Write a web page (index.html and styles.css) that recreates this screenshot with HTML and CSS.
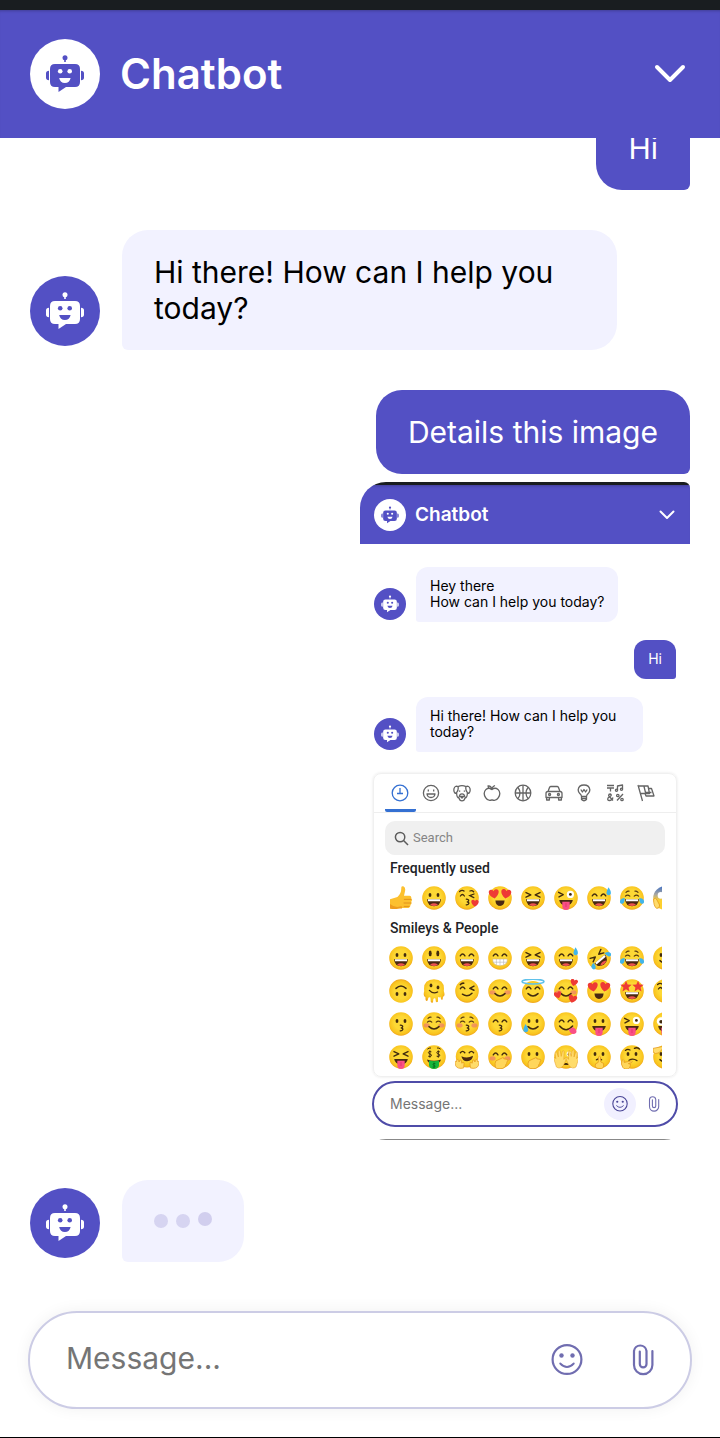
FILE: index.html
```html
<!DOCTYPE html>
<html lang="en">
<head>
<meta charset="utf-8">
<meta name="viewport" content="width=device-width, initial-scale=1">
<title>Chatbot</title>
<link rel="stylesheet" href="styles.css">
</head>
<body>

<svg class="sprite" aria-hidden="true">
  <defs>
    <radialGradient id="skin" cx="50%" cy="45%" r="55%">
      <stop offset="0.5" stop-color="#fdd835"/>
      <stop offset="0.85" stop-color="#f9c41e"/>
      <stop offset="1" stop-color="#efa41c"/>
    </radialGradient>
    <linearGradient id="fright" x1="0" y1="0" x2="0" y2="1">
      <stop offset="0" stop-color="#3f6fc4"/>
      <stop offset="0.35" stop-color="#a9a7a0"/>
      <stop offset="0.6" stop-color="#fdd02f"/>
    </linearGradient>

    <circle id="p-face" cx="12" cy="12" r="11.8" fill="url(#skin)"/>
    <g id="p-eyes" fill="#422b0d"><ellipse cx="8" cy="9" rx="1.4" ry="2"/><ellipse cx="16" cy="9" rx="1.4" ry="2"/></g>
    <g id="p-tall" fill="#422b0d"><ellipse cx="8.2" cy="7.4" rx="1.5" ry="2.9"/><ellipse cx="15.8" cy="7.4" rx="1.5" ry="2.9"/></g>
    <path id="p-happy" d="M5.3 9.8Q7.6 6.4 9.9 9.8M14.1 9.8Q16.4 6.4 18.7 9.8" fill="none" stroke="#422b0d" stroke-width="1.5" stroke-linecap="round"/>
    <path id="p-shut" d="M5.4 10.2Q7.6 8 9.8 10.2M14.2 10.2Q16.4 8 18.6 10.2M6 6.4Q7.4 5 9 5.2M15 5.2Q16.6 5 18 6.4" fill="none" stroke="#5a3d12" stroke-width="1.2" stroke-linecap="round"/>
    <path id="p-squint" d="M5 6.6L9.8 8.9L5 11.2M19 6.6L14.2 8.9L19 11.2" fill="none" stroke="#422b0d" stroke-width="1.4" stroke-linecap="round" stroke-linejoin="round"/>
    <g id="p-open"><path d="M5 13.2H19Q18.3 20.2 12 20.2Q5.7 20.2 5 13.2Z" fill="#4a2911"/><path d="M6 13.2H18V15.3H6Z" fill="#fff"/><path d="M8 18.7Q12 15.9 16 18.7Q12 21.2 8 18.7Z" fill="#ef5350"/></g>
    <path id="p-smile" d="M7 14.6Q12 19.4 17 14.6" fill="none" stroke="#422b0d" stroke-width="1.5" stroke-linecap="round"/>
    <path id="p-kiss" d="M11.3 13.2Q14.2 13.6 13.6 14.9Q13.2 15.9 11.8 15.9Q14.3 16.2 13.8 17.5Q13.2 19 11.2 18.8" fill="none" stroke="#422b0d" stroke-width="1.3" stroke-linecap="round"/>
    <g id="p-blush" fill="#ed7770" opacity="0.65"><ellipse cx="4.6" cy="13.4" rx="3" ry="2.1"/><ellipse cx="19.4" cy="13.4" rx="3" ry="2.1"/></g>
    <g id="p-tongue"><path d="M5.2 14H18.8Q18 19.4 12 19.4Q6 19.4 5.2 14Z" fill="#4a2911"/><path d="M8.3 15.8H15.7V20Q15.7 24 12 24Q8.3 24 8.3 20Z" fill="#fa4f86"/><path d="M12 17V21" stroke="#d92f66" stroke-width="0.7"/></g>
    <path id="p-heart" d="M0 3.4C-5 0.2-4.2-3.6-1.8-3.4C-0.5-3.4 0-2 0-2C0-2 0.6-3.6 2.2-3.3C4.8-2.8 4 1 0 3.4Z" fill="#ee3a35"/>
    <g id="p-wild"><path d="M4.6 6.3L9.2 8.6L5 10.9" fill="none" stroke="#422b0d" stroke-width="1.4" stroke-linecap="round" stroke-linejoin="round"/><circle cx="16.4" cy="8.4" r="3.6" fill="#fff"/><circle cx="16.4" cy="8.4" r="1.4" fill="#422b0d"/></g>
    <path id="p-hand" d="M7.4 22.6Q6.5 18 7.8 15.9L14.8 12.7Q16.2 12.5 15.8 13.8L19.4 14.4Q20.6 15 19.4 16L18.8 17.6Q19.3 18.6 18 19.1Q17.5 23.8 12 23.8Q8.8 23.8 7.4 22.6Z" fill="#ffd65b" stroke="#e59a1c" stroke-width="0.8"/>
    <path id="p-star" d="M0-4.2L1.2-1.4L4.2-1.2L1.9 0.8L2.6 3.8L0 2.2L-2.6 3.8L-1.9 0.8L-4.2-1.2L-1.2-1.4Z" fill="#ee3a35"/>
    <g id="p-joytears" fill="#40b5ea"><path d="M4.8 12Q-0.6 12.6 0 16.4Q1.2 19 3.6 17Q4.8 15.5 4.8 12Z"/><path d="M19.2 12Q24.6 12.6 24 16.4Q22.8 19 20.4 17Q19.2 15.5 19.2 12Z"/></g>
  </defs>

  <symbol id="e-thumb" viewBox="0 0 24 24"><path d="M1 13.2L8.4 11Q12.5 7.6 12.3 1.5Q12.6-0.2 14.8 0.6Q17 2 15.8 6.2L15 9.7H20.6Q22.8 10.1 22.2 12.3Q23.7 13.8 22.2 15.7Q23.2 17.5 21.4 18.9Q21.8 21.2 19.5 22H11Q7.5 23.7 1 22.4Z" fill="#fcc02f"/><path d="M1 18Q6 22 10.8 20.5Q14 19.5 13 22.4H9Q6 23.6 1 22.4Z" fill="#ee9c20"/><path d="M15.3 13.4H22M15 17H21.8M15.2 20.4H20" stroke="#de8c1c" stroke-width="0.9" stroke-linecap="round"/></symbol>
  <symbol id="e-grinning" viewBox="0 0 24 24"><use href="#p-face"/><use href="#p-eyes"/><use href="#p-open"/></symbol>
  <symbol id="e-smiley" viewBox="0 0 24 24"><use href="#p-face"/><use href="#p-tall"/><use href="#p-open"/></symbol>
  <symbol id="e-smile" viewBox="0 0 24 24"><use href="#p-face"/><use href="#p-happy"/><use href="#p-open"/></symbol>
  <symbol id="e-grin" viewBox="0 0 24 24"><use href="#p-face"/><use href="#p-happy"/><path d="M4.6 13H19.4Q19.6 19.6 12 19.8Q4.4 19.6 4.6 13Z" fill="#fff" stroke="#d6b46c" stroke-width="0.6"/><path d="M4.8 16.2H19.2M8.4 13V19M12 13V19.6M15.6 13V19" stroke="#b5b5b5" stroke-width="0.6"/></symbol>
  <symbol id="e-laughing" viewBox="0 0 24 24"><use href="#p-face"/><use href="#p-squint"/><use href="#p-open"/></symbol>
  <symbol id="e-sweat" viewBox="0 0 24 24"><use href="#p-face"/><use href="#p-happy"/><use href="#p-open"/><path d="M21.6 1.2Q25 6.6 23.4 8.4Q21.4 10 19.8 8.2Q18.6 6 21.6 1.2Z" fill="#40b5ea"/></symbol>
  <symbol id="e-joy" viewBox="0 0 24 24"><use href="#p-face"/><use href="#p-shut"/><use href="#p-open"/><use href="#p-joytears"/></symbol>
  <symbol id="e-rofl" viewBox="0 0 24 24"><g transform="rotate(-40 12 12)"><use href="#p-face"/><use href="#p-squint"/><use href="#p-open"/><use href="#p-joytears"/></g></symbol>
  <symbol id="e-slight" viewBox="0 0 24 24"><use href="#p-face"/><use href="#p-eyes"/><use href="#p-smile"/></symbol>
  <symbol id="e-upside" viewBox="0 0 24 24"><g transform="rotate(180 12 12)"><use href="#p-face"/><use href="#p-eyes"/><use href="#p-smile"/></g></symbol>
  <symbol id="e-melting" viewBox="0 0 24 24"><path d="M2.2 12Q0.8 0.4 12 0.2Q23.2 0.4 21.8 12Q23.6 17.4 21 17.8L20.6 20.4Q19.4 21.4 19 20L18.4 17.8Q17.2 19.4 16 17.8V22.6Q14.8 24 13.8 22.6L13.4 19.6Q12.2 18.6 11.4 20L11 23.2Q9.8 24.4 8.8 23L8.4 18.6Q7 17.6 6.4 18.8L5.6 21.6Q4.4 22.6 3.6 21L3.4 18Q0.8 17.8 2.2 12Z" fill="url(#skin)"/><g fill="#422b0d"><ellipse cx="9" cy="6.4" rx="1.4" ry="1.9"/><ellipse cx="16" cy="8.4" rx="1.4" ry="1.9"/></g><path d="M7.4 11.4Q11 15.4 15.6 13" fill="none" stroke="#422b0d" stroke-width="1.4" stroke-linecap="round"/></symbol>
  <symbol id="e-wink" viewBox="0 0 24 24"><use href="#p-face"/><path d="M5.4 9.6Q7.6 6.6 9.8 9.6M19 7.2L14.8 9.3L19 11.2M5.4 5.6Q7 3.8 8.8 4.2M7.4 15.2Q12.6 18.8 17 14.2" fill="none" stroke="#422b0d" stroke-width="1.5" stroke-linecap="round" stroke-linejoin="round"/></symbol>
  <symbol id="e-blush" viewBox="0 0 24 24"><use href="#p-face"/><use href="#p-blush"/><use href="#p-happy"/><use href="#p-smile"/></symbol>
  <symbol id="e-innocent" viewBox="0 0 24 24"><circle cx="12" cy="13" r="11" fill="url(#skin)"/><use href="#p-happy"/><use href="#p-smile"/><ellipse cx="12" cy="2.6" rx="11" ry="2.4" fill="none" stroke="#5fc1ea" stroke-width="1.5"/></symbol>
  <symbol id="e-hearts" viewBox="0 0 24 24"><use href="#p-face"/><use href="#p-blush"/><use href="#p-happy"/><use href="#p-smile"/><use href="#p-heart" transform="translate(20 3.6) rotate(14)"/><use href="#p-heart" transform="translate(3.8 16) rotate(-16)"/><use href="#p-heart" transform="translate(18.6 20) rotate(14) scale(1.15)"/></symbol>
  <symbol id="e-hearteyes" viewBox="0 0 24 24"><use href="#p-face"/><path d="M7.4 14.6H16.6Q16.2 20 12 20Q7.8 20 7.4 14.6Z" fill="#4a2911"/><use href="#p-heart" transform="translate(6 8) rotate(-8) scale(1.35)"/><use href="#p-heart" transform="translate(18 8) rotate(8) scale(1.35)"/></symbol>
  <symbol id="e-starstruck" viewBox="0 0 24 24"><use href="#p-face"/><use href="#p-open"/><use href="#p-star" transform="translate(6 7.4) scale(1.35)"/><use href="#p-star" transform="translate(18 7.4) scale(1.35)"/></symbol>
  <symbol id="e-kissheart" viewBox="0 0 24 24"><use href="#p-face"/><use href="#p-kiss"/><path d="M5.4 10Q7.4 7 9.4 10M19 8L14.8 9.6L18.8 11.6M4.6 5.6Q7 3.4 9 5M15 5Q17 4 18.6 5.8" fill="none" stroke="#422b0d" stroke-width="1.3" stroke-linecap="round"/><use href="#p-heart" transform="translate(20 17.2)"/></symbol>
  <symbol id="e-kissing" viewBox="0 0 24 24"><use href="#p-face"/><use href="#p-eyes"/><use href="#p-kiss"/></symbol>
  <symbol id="e-relaxed" viewBox="0 0 24 24"><use href="#p-face"/><use href="#p-blush"/><use href="#p-shut"/><use href="#p-smile"/></symbol>
  <symbol id="e-kissclosed" viewBox="0 0 24 24"><use href="#p-face"/><use href="#p-blush"/><use href="#p-shut"/><use href="#p-kiss"/></symbol>
  <symbol id="e-kisssmile" viewBox="0 0 24 24"><use href="#p-face"/><use href="#p-happy"/><use href="#p-kiss"/></symbol>
  <symbol id="e-tear" viewBox="0 0 24 24"><use href="#p-face"/><use href="#p-eyes"/><use href="#p-smile"/><path d="M4.6 12Q8 17 7 19Q5 21.6 2.6 19.2Q1.6 17 4.6 12Z" fill="#40b5ea"/></symbol>
  <symbol id="e-yum" viewBox="0 0 24 24"><use href="#p-face"/><use href="#p-happy"/><path d="M5.6 14Q12 21.4 18.6 14" fill="none" stroke="#422b0d" stroke-width="1.5" stroke-linecap="round"/><path d="M14.6 17.6L19 15.2Q23.6 17.4 22.2 20.8Q19.6 23.4 16.4 20.8Z" fill="#fa4f86"/></symbol>
  <symbol id="e-tongue" viewBox="0 0 24 24"><use href="#p-face"/><use href="#p-eyes"/><use href="#p-tongue"/></symbol>
  <symbol id="e-winktongue" viewBox="0 0 24 24"><use href="#p-face"/><use href="#p-wild"/><use href="#p-tongue"/></symbol>
  <symbol id="e-zany" viewBox="0 0 24 24"><use href="#p-face"/><circle cx="8" cy="9.4" r="4.2" fill="#fff"/><circle cx="8" cy="9.8" r="1.7" fill="#422b0d"/><circle cx="17" cy="8" r="3" fill="#fff"/><use href="#p-tongue"/></symbol>
  <symbol id="e-squinttongue" viewBox="0 0 24 24"><use href="#p-face"/><use href="#p-squint"/><use href="#p-tongue"/></symbol>
  <symbol id="e-money" viewBox="0 0 24 24"><use href="#p-face"/><path d="M9.4 6.8Q6.2 5.8 6.4 7.6Q6.6 8.8 8 9Q9.8 9.4 9.4 10.8Q8.6 12.2 6.2 11.2M7.9 5.4V12.6M17.8 6.8Q14.6 5.8 14.8 7.6Q15 8.8 16.4 9Q18.2 9.4 17.8 10.8Q17 12.2 14.6 11.2M16.3 5.4V12.6M5.4 4.2Q7 2.6 9 3M15 3Q17 2.6 18.6 4.2" fill="none" stroke="#422b0d" stroke-width="1"/><path d="M5 14.4Q12 17 19 14.4Q18.4 18.6 12 18.8Q5.6 18.6 5 14.4Z" fill="#4a2911"/><path d="M7 15.4Q12 17 17 15.4V20.6Q16.4 24 12 24Q7.6 24 7 20.6Z" fill="#18b63a"/><path d="M13.4 18.6Q10.8 18 11 19.4Q11.2 20.2 12 20.4Q13.6 20.8 13 21.8Q12.2 22.6 10.6 22M12 17.6V23" stroke="#076a1c" stroke-width="0.8" fill="none"/></symbol>
  <symbol id="e-hug" viewBox="0 0 24 24"><circle cx="12" cy="11.4" r="11.2" fill="url(#skin)"/><path d="M5.4 7.8Q7.6 5 9.8 7.8M14.2 7.8Q16.4 5 18.6 7.8" fill="none" stroke="#422b0d" stroke-width="1.4" stroke-linecap="round"/><path d="M6.4 11.2Q12 14 18 10.8Q17.4 16.2 12 16.2Q7.4 16.2 6.4 11.2Z" fill="#4a2911"/><path id="hug-hand" d="M8.6 23Q2.4 24.4 0.6 20.6L-0.2 16.6Q0.6 15.6 1.4 17L2 14.6Q3 13.8 3.6 15L4 17L5.2 14.8Q6.4 14.6 6.4 16L6.8 18.2L8 17.4Q9.6 17.4 9 19Z" fill="#ffdc6b" stroke="#e59a1c" stroke-width="0.7"/><use href="#hug-hand" transform="translate(24 0) scale(-1 1)"/></symbol>
  <symbol id="e-giggle" viewBox="0 0 24 24"><use href="#p-face"/><use href="#p-blush"/><use href="#p-happy"/><use href="#p-hand"/></symbol>
  <symbol id="e-gasp" viewBox="0 0 24 24"><use href="#p-face"/><use href="#p-eyes"/><use href="#p-hand"/></symbol>
  <symbol id="e-peek" viewBox="0 0 24 24"><use href="#p-face"/><ellipse cx="15" cy="9" rx="2.4" ry="2.8" fill="#fff"/><circle cx="15" cy="9.4" r="1.3" fill="#422b0d"/><path d="M9.4 19.4Q12 17.4 14.6 19.4Z" fill="#422b0d" stroke="#422b0d" stroke-width="1"/><path id="peek-hand" d="M2.4 22L0 14.6Q-0.6 12.6 0.6 12.2L1.8 13.6L1 8Q1 6.4 2.6 6.8L4.4 12L4.2 5.6Q5 4.2 6.2 5.6L7.2 11.4L8.4 6Q9.8 5 10.2 6.8L9.8 14.4L11.6 12.2Q13 12.4 12.4 14L9.4 20.6Q6 24.6 2.4 22Z" fill="#ffdc6b" stroke="#e59a1c" stroke-width="0.5"/><use href="#peek-hand" transform="translate(24.4 0) scale(-1 1)"/></symbol>
  <symbol id="e-shush" viewBox="0 0 24 24"><use href="#p-face"/><use href="#p-eyes"/><path d="M9.4 14.8Q12 13.2 14.6 14.8" fill="none" stroke="#422b0d" stroke-width="1.3" stroke-linecap="round"/><path d="M10.8 23.4Q7.4 22.4 8.6 18.8L11.2 17.4L11.6 11.8Q12.6 10.6 13.4 11.8L13.8 17L16.6 18.4Q17.6 23 14.6 23.6Z" fill="#ffd65b" stroke="#e59a1c" stroke-width="0.8"/></symbol>
  <symbol id="e-think" viewBox="0 0 24 24"><use href="#p-face"/><use href="#p-eyes"/><path d="M5.4 5.4Q7.6 3.6 10 5M14.4 3.4Q17 1.8 19.4 4M9 15.2Q13 13 17 15.6" fill="none" stroke="#422b0d" stroke-width="1.3" stroke-linecap="round"/><path d="M2.8 22.4Q0.4 19 2 15.6Q3.4 13.6 4 15.4L4.2 17.4L11.4 15.8Q12.8 16.4 11.6 17.6L8.4 18.6Q11.4 18.6 10.4 20.6Q9.4 24.6 5.6 24Q3.8 24 2.8 22.4Z" fill="#ffd65b" stroke="#e59a1c" stroke-width="0.8"/></symbol>
  <symbol id="e-salute" viewBox="0 0 24 24"><use href="#p-face"/><use href="#p-eyes"/><use href="#p-smile"/><path d="M0 3.4L9 1.6Q11 2 9.8 3.6L6 7.8Q2 9.6 0 7Z" fill="#ffdc6b" stroke="#e59a1c" stroke-width="0.8"/></symbol>
  <symbol id="e-scream" viewBox="0 0 24 24"><circle cx="12" cy="12" r="11.8" fill="url(#fright)"/><circle cx="8" cy="9.4" r="3.3" fill="#fff"/><circle cx="16" cy="9.4" r="3.3" fill="#fff"/><ellipse cx="12" cy="17.6" rx="3" ry="4" fill="#4a2911"/><path d="M0.6 13Q2.6 10.8 4 14L6.6 19Q7 22.6 3.6 22.4Q0.4 20 0.6 13Z" fill="#ffdc6b" stroke="#e59a1c" stroke-width="0.8"/></symbol>

  <symbol id="i-robot" viewBox="0 0 70 70">
    <g fill="currentColor"><circle cx="35" cy="18.8" r="2.5"/><path d="M34.2 20H35.8V23H34.2Z"/><path d="M25 25H45Q50 25 50 30V43Q50 48 45 48H36L28.5 53V48H25Q20 48 20 43V30Q20 25 25 25Z"/><path d="M19 31.8V41.2Q16 41.2 16 38.5V34.5Q16 31.8 19 31.8ZM51 31.8V41.2Q54 41.2 54 38.5V34.5Q54 31.8 51 31.8Z"/></g>
    <g class="robot-cut"><circle cx="30.2" cy="32.2" r="2.3"/><circle cx="39.7" cy="32.2" r="2.3"/><path d="M29.2 39H40.6Q39.6 44 34.9 44Q30.2 44 29.2 39Z"/></g>
  </symbol>
  <symbol id="i-chevron" viewBox="0 0 32 20"><path d="M3 3L16 16L29 3" fill="none" stroke="currentColor" stroke-width="4" stroke-linecap="round" stroke-linejoin="round"/></symbol>
  <symbol id="i-smiley" viewBox="0 0 32 32"><g fill="none" stroke="currentColor" stroke-linecap="round"><circle cx="16" cy="15.5" r="14.4" stroke-width="2.2"/><path d="M9.2 19.5Q16 26.500 22.8 19.5" stroke-width="1.8"/></g><circle cx="10.5" cy="11.5" r="2.2" fill="currentColor"/><circle cx="21.5" cy="11.5" r="2.2" fill="currentColor"/></symbol>
  <symbol id="i-clip" viewBox="0 0 32 32"><path d="M25.4 7V21A9 9 0 0 1 7 21V7A6.3 6.3 0 0 1 19.5 7V20A3.3 3.3 0 0 1 12.8 20V7.5" fill="none" stroke="currentColor" stroke-width="2.2" stroke-linecap="round"/></symbol>
</svg>

<div class="chatbot">
  <div class="status-strip"></div>
  <header class="chat-header">
    <span class="avatar avatar-light"><svg class="icon"><use href="#i-robot"/></svg></span>
    <h1 class="title">Chatbot</h1>
    <button class="close" type="button" aria-label="Close chat"><svg class="icon"><use href="#i-chevron"/></svg></button>
  </header>

  <main class="chat-body">
    <div class="messages">
      <div class="message user"><p class="bubble">Hi</p></div>
      <div class="message bot">
        <span class="avatar"><svg class="icon"><use href="#i-robot"/></svg></span>
        <p class="bubble">Hi there! How can I help you today?</p>
      </div>
      <div class="message user">
        <p class="bubble">Details this image</p>

        <section class="attachment" aria-label="Attached image">
          <div class="status-strip"></div>
          <header class="chat-header">
            <span class="avatar avatar-light"><svg class="icon"><use href="#i-robot"/></svg></span>
            <h2 class="title">Chatbot</h2>
            <button class="close" type="button" aria-label="Close preview"><svg class="icon"><use href="#i-chevron"/></svg></button>
          </header>
          <div class="messages">
            <div class="message bot">
              <span class="avatar"><svg class="icon"><use href="#i-robot"/></svg></span>
              <p class="bubble">Hey there<br>How can I help you today?</p>
            </div>
            <div class="message user"><p class="bubble">Hi</p></div>
            <div class="message bot">
              <span class="avatar"><svg class="icon"><use href="#i-robot"/></svg></span>
              <p class="bubble">Hi there! How can I help you today?</p>
            </div>
          </div>

          <div class="picker">
            <nav class="tabs" aria-label="Emoji categories">
              <button class="tab active" type="button" aria-label="Frequently used"><svg viewBox="0 0 18 18"><circle cx="9" cy="9" r="7.8"/><path d="M9 4V10M6 9.5H12"/></svg></button>
              <button class="tab" type="button" aria-label="Smileys and people"><svg viewBox="0 0 18 18"><circle cx="9" cy="9" r="7.6"/><path d="M5 10H13Q12.5 13.5 9 13.5Q5.500 13.5 5 10ZM6.300 5.600V7.400M11.700 5.600V7.400"/></svg></button>
              <button class="tab" type="button" aria-label="Animals and nature"><svg viewBox="0 0 18 18"><path d="M5 2.600Q9 0.800 13 2.600Q16 1.400 17 4.600Q17.600 8 15.800 9.400L14.400 8.600Q14.400 14 11.800 14.400Q11.400 16.800 9 16.800Q6.600 16.800 6.200 14.400Q3.600 14 3.600 8.600L2.200 9.400Q0.400 8 1 4.600Q2 1.400 5 2.600ZM5.200 3Q5.600 6 3.600 8.600M12.800 3Q12.400 6 14.400 8.600M6.600 6.400V7.800M11.400 6.400V7.800M6 13.500Q6.500 9.800 9 9.800Q11.500 9.800 12 13.500M7.500 12.500H10.500L9 14Z"/></svg></button>
              <button class="tab" type="button" aria-label="Food and drink"><svg viewBox="0 0 18 18"><path d="M9 5.500Q12 3 15 5.400Q18.400 9 15.400 13.600Q13 17.600 9 15.800Q5 17.600 2.600 13.600Q-0.400 9 3 5.400Q6 3 9 5.500ZM9 5.500Q9 2.500 12 1.500M9 5.500Q5.500 5 5 2Q8 1.500 9 5.500"/></svg></button>
              <button class="tab" type="button" aria-label="Activities"><svg viewBox="0 0 18 18"><circle cx="9" cy="9" r="7.8"/><path d="M9 1.200V16.800M1.200 9H16.800M4 3.500Q8 9 4 14.500M14 3.500Q10 9 14 14.500"/></svg></button>
              <button class="tab" type="button" aria-label="Travel and places"><svg viewBox="0 0 18 18"><path d="M3 7.500L4.600 3.200Q5 2.500 6 2.500H12Q13 2.500 13.400 3.200L15 7.500M3 7.500H15Q17 7.500 17 9.500V13.500H1V9.500Q1 7.500 3 7.500ZM1.600 13.500V16H4.400V13.500M13.600 13.500V16H16.400V13.500"/><circle cx="4.600" cy="10.500" r="1"/><circle cx="13.400" cy="10.500" r="1"/></svg></button>
              <button class="tab" type="button" aria-label="Objects"><svg viewBox="0 0 18 18"><path d="M6.500 12.500Q6.500 11 4.800 9.600Q3 7.800 3.200 5.600Q3.800 1 9 1Q14.200 1 14.800 5.600Q15 7.800 13.200 9.600Q11.500 11 11.500 12.500ZM6.500 12.500V15.500Q9 18 11.500 15.500V12.500M6.500 14.500H11.500M5.800 5.500L7.400 8L9 5.500L10.600 8L12.200 5.500"/></svg></button>
              <button class="tab" type="button" aria-label="Symbols"><svg viewBox="0 0 18 18"><path d="M1 1.500H8M1 4H8M4.500 4V7.500M11.500 6V2L16.500 1V5M7 16.500L2.600 11.800Q2.600 10 4.200 10Q5.800 10.400 5 11.800L2 14Q1 16.500 3.500 16.500Q6 16.500 7 13.500M11 16.500L17 10"/><circle cx="10.500" cy="6.300" r="1.100"/><circle cx="15.500" cy="5.300" r="1.100"/><circle cx="11.800" cy="11.500" r="1.200"/><circle cx="16" cy="15.500" r="1.200"/></svg></button>
              <button class="tab" type="button" aria-label="Flags"><svg viewBox="0 0 18 18"><path d="M1 1L5.500 17M2 2H11L12.500 9.500H4M11 4.500H14.500L17 12H9L8 9.500M7 2.500L8.500 8.500H14.500"/></svg></button>
            </nav>
            <div class="search">
              <svg viewBox="0 0 16 16" aria-hidden="true"><circle cx="6.500" cy="6.500" r="5"/><path d="M10.200 10.200L15 15"/></svg>
              <input type="search" placeholder="Search" aria-label="Search emoji">
            </div>
            <h3 class="group-title">Frequently used</h3>
            <div class="emoji-grid">
              <button type="button" aria-label="Thumbs up"><svg><use href="#e-thumb"/></svg></button>
              <button type="button" aria-label="Grinning"><svg><use href="#e-grinning"/></svg></button>
              <button type="button" aria-label="Blowing a kiss"><svg><use href="#e-kissheart"/></svg></button>
              <button type="button" aria-label="Heart eyes"><svg><use href="#e-hearteyes"/></svg></button>
              <button type="button" aria-label="Laughing"><svg><use href="#e-laughing"/></svg></button>
              <button type="button" aria-label="Winking with tongue"><svg><use href="#e-winktongue"/></svg></button>
              <button type="button" aria-label="Sweat smile"><svg><use href="#e-sweat"/></svg></button>
              <button type="button" aria-label="Tears of joy"><svg><use href="#e-joy"/></svg></button>
              <button type="button" aria-label="Screaming"><svg><use href="#e-scream"/></svg></button>
            </div>
            <h3 class="group-title">Smileys &amp; People</h3>
            <div class="emoji-grid">
              <button type="button" aria-label="Grinning"><svg><use href="#e-grinning"/></svg></button>
              <button type="button" aria-label="Big smile"><svg><use href="#e-smiley"/></svg></button>
              <button type="button" aria-label="Smiling eyes"><svg><use href="#e-smile"/></svg></button>
              <button type="button" aria-label="Beaming"><svg><use href="#e-grin"/></svg></button>
              <button type="button" aria-label="Laughing"><svg><use href="#e-laughing"/></svg></button>
              <button type="button" aria-label="Sweat smile"><svg><use href="#e-sweat"/></svg></button>
              <button type="button" aria-label="Rolling on the floor"><svg><use href="#e-rofl"/></svg></button>
              <button type="button" aria-label="Tears of joy"><svg><use href="#e-joy"/></svg></button>
              <button type="button" aria-label="Slight smile"><svg><use href="#e-slight"/></svg></button>

              <button type="button" aria-label="Upside down"><svg><use href="#e-upside"/></svg></button>
              <button type="button" aria-label="Melting"><svg><use href="#e-melting"/></svg></button>
              <button type="button" aria-label="Wink"><svg><use href="#e-wink"/></svg></button>
              <button type="button" aria-label="Blush"><svg><use href="#e-blush"/></svg></button>
              <button type="button" aria-label="Halo"><svg><use href="#e-innocent"/></svg></button>
              <button type="button" aria-label="Smiling with hearts"><svg><use href="#e-hearts"/></svg></button>
              <button type="button" aria-label="Heart eyes"><svg><use href="#e-hearteyes"/></svg></button>
              <button type="button" aria-label="Star struck"><svg><use href="#e-starstruck"/></svg></button>
              <button type="button" aria-label="Blowing a kiss"><svg><use href="#e-kissheart"/></svg></button>

              <button type="button" aria-label="Kissing"><svg><use href="#e-kissing"/></svg></button>
              <button type="button" aria-label="Relaxed"><svg><use href="#e-relaxed"/></svg></button>
              <button type="button" aria-label="Kissing, closed eyes"><svg><use href="#e-kissclosed"/></svg></button>
              <button type="button" aria-label="Kissing, smiling eyes"><svg><use href="#e-kisssmile"/></svg></button>
              <button type="button" aria-label="Smiling with tear"><svg><use href="#e-tear"/></svg></button>
              <button type="button" aria-label="Yum"><svg><use href="#e-yum"/></svg></button>
              <button type="button" aria-label="Tongue out"><svg><use href="#e-tongue"/></svg></button>
              <button type="button" aria-label="Winking with tongue"><svg><use href="#e-winktongue"/></svg></button>
              <button type="button" aria-label="Zany"><svg><use href="#e-zany"/></svg></button>

              <button type="button" aria-label="Squinting with tongue"><svg><use href="#e-squinttongue"/></svg></button>
              <button type="button" aria-label="Money mouth"><svg><use href="#e-money"/></svg></button>
              <button type="button" aria-label="Hugging"><svg><use href="#e-hug"/></svg></button>
              <button type="button" aria-label="Hand over mouth"><svg><use href="#e-giggle"/></svg></button>
              <button type="button" aria-label="Gasping"><svg><use href="#e-gasp"/></svg></button>
              <button type="button" aria-label="Peeking"><svg><use href="#e-peek"/></svg></button>
              <button type="button" aria-label="Shushing"><svg><use href="#e-shush"/></svg></button>
              <button type="button" aria-label="Thinking"><svg><use href="#e-think"/></svg></button>
              <button type="button" aria-label="Saluting"><svg><use href="#e-salute"/></svg></button>
            </div>
          </div>

          <div class="composer">
            <input type="text" placeholder="Message..." aria-label="Preview message">
            <button class="tool active" type="button" aria-label="Preview emoji"><svg class="icon"><use href="#i-smiley"/></svg></button>
            <button class="tool" type="button" aria-label="Preview attach"><svg class="icon"><use href="#i-clip"/></svg></button>
          </div>
          <div class="attachment-edge"></div>
        </section>
      </div>

      <div class="message bot">
        <span class="avatar"><svg class="icon"><use href="#i-robot"/></svg></span>
        <div class="bubble typing" role="status" aria-label="Chatbot is typing"><span class="dot"></span><span class="dot"></span><span class="dot raised"></span></div>
      </div>
    </div>
  </main>

  <form class="composer">
    <input type="text" placeholder="Message..." aria-label="Message">
    <button class="tool" type="button" aria-label="Emoji"><svg class="icon"><use href="#i-smiley"/></svg></button>
    <button class="tool" type="button" aria-label="Attach file"><svg class="icon"><use href="#i-clip"/></svg></button>
  </form>
</div>
</body>
</html>
```

FILE: styles.css
```css
:root {
  --brand: #5350c4;
  --bubble: #f2f2ff;
}

* { box-sizing: border-box; }

body {
  margin: 0;
  background: #fff;
  color: #000;
  font-family: Inter, "Liberation Sans", sans-serif;
}

h1, h2, h3, p { margin: 0; }

button {
  margin: 0;
  padding: 0;
  border: 0;
  background: none;
  color: inherit;
  font: inherit;
}

input {
  min-width: 0;
  margin: 0;
  padding: 0;
  border: 0;
  outline: 0;
  background: none;
  font: inherit;
  appearance: none;
}

input::placeholder { color: #757575; opacity: 1; }

svg { display: block; }

.sprite {
  position: absolute;
  width: 0;
  height: 0;
}

.robot-cut { fill: var(--cut); }

.chatbot {
  display: flex;
  flex-direction: column;
  min-height: 100vh;
  border-bottom: 1px solid #000;
}

/* Header */
.status-strip { height: 10px; background: #191d20; }

.chat-header {
  display: flex;
  align-items: center;
  gap: 20px;
  padding: 29px 30px;
  background: var(--brand);
  box-shadow: inset 0 3px 3px -2px #413f96;
  color: #fff;
}

.avatar {
  --cut: var(--brand);
  flex: none;
  width: 70px;
  height: 70px;
  border-radius: 50%;
  background: var(--brand);
  color: #fff;
}

.avatar-light {
  --cut: #fff;
  background: #fff;
  color: var(--brand);
}

.avatar .icon { width: 100%; height: 100%; }

.title {
  flex: 1;
  font-size: 42px;
  line-height: 50px;
  font-weight: 600;
}

.close { padding: 0 4px; }
.close .icon { width: 32px; height: 20px; }

/* Messages */
.chat-body { flex: 1; overflow: hidden; }

.messages {
  display: flex;
  flex-direction: column;
  gap: 40px;
  padding: 0 30px 49px;
}

/* The list is scrolled so that its first bubble sits partly under the header */
.chat-body > .messages { margin-top: -32px; }

.message {
  display: flex;
  font-size: 30px;
  line-height: 36px;
}

.message.user { flex-direction: column; align-items: flex-end; }
.message.bot { align-items: flex-end; gap: 22px; }
.message.bot > .avatar { margin-bottom: 4px; }

.bubble {
  max-width: 75%;
  padding: 24px 32px;
  border-radius: 26px 26px 26px 6px;
  background: var(--bubble);
}

.user > .bubble {
  border-radius: 26px 26px 6px 26px;
  background: var(--brand);
  color: #fff;
}

.typing {
  display: flex;
  gap: 8px;
  padding: 34px 32px;
}

.dot {
  width: 14px;
  height: 14px;
  border-radius: 50%;
  background: #d6d4f1;
}

.dot.raised { transform: translateY(-2px); background: #d1ceee; }

/* Composer */
.composer {
  display: flex;
  align-items: center;
  gap: 6px;
  height: 98px;
  margin: 0 28px 28px;
  padding: 0 12px 0 36px;
  border: 2px solid #cccce5;
  border-radius: 49px;
  background: #fff;
  box-shadow: 0 0 16px rgba(0, 0, 0, 0.06);
  font-size: 30px;
}

.composer input {
  flex: 1;
  height: 100%;
  padding-bottom: 4px;
}

.tool {
  display: grid;
  flex: none;
  place-items: center;
  width: 70px;
  height: 70px;
  border-radius: 50%;
  color: #706db0;
}

.tool .icon { width: 32px; height: 32px; }

/* Attached picture */
.attachment {
  width: 50%;
  margin-top: 8px;
  overflow: hidden;
  border-radius: 26px 6px 26px 26px;
  background: #fff;
}

.attachment .status-strip { height: 3px; }

.attachment .chat-header {
  gap: 9px;
  height: 59px;
  padding: 0 14px;
}

.attachment .avatar { width: 32px; height: 32px; }
.attachment .title { font-size: 19px; line-height: 24px; }
.attachment .close { padding: 0 1px; }
.attachment .close .icon { width: 16px; height: 10px; }

.attachment .messages { gap: 18px; padding: 23px 14px 21px; }
.attachment .message { font-size: 14px; line-height: 16px; }
.attachment .message.bot { gap: 10px; }
.attachment .message.bot > .avatar { margin-bottom: 2px; }

.attachment .bubble {
  padding: 11px 14px 12px;
  border-radius: 12px 12px 12px 3px;
}

.attachment .user > .bubble { border-radius: 12px 12px 3px 12px; }

.attachment .composer {
  gap: 2px;
  height: 46px;
  margin: 4px 12px 11px;
  padding: 0 6px 0 16px;
  border-color: #4f4ca8;
  box-shadow: none;
  font-size: 14px;
  line-height: 16px;
}

.attachment .composer input { padding-bottom: 2px; }

.attachment .tool { width: 32px; height: 32px; }
.attachment .tool .icon { width: 16px; height: 16px; }
.attachment .tool.active { background: #f1f0ff; color: #4a4696; }

.attachment-edge { height: 1px; margin-top: 12px; background: #888; }

/* Emoji picker */
.picker {
  height: 304px;
  margin: 0 13px;
  border: 1px solid #f0f0f0;
  border-radius: 8px;
  box-shadow: 0 0 3px rgba(0, 0, 0, 0.1);
  overflow: hidden;
  font-family: Roboto, "Liberation Sans", sans-serif;
}

.tabs {
  display: flex;
  padding: 0 15px 0 11px;
  border-bottom: 1px solid #eee;
}

.tab {
  display: grid;
  flex: 1;
  place-items: center;
  height: 38px;
  padding-top: 3px;
  border-bottom: 3px solid transparent;
  color: #646464;
}

.tab.active { border-color: #3470d2; border-radius: 2px; color: #3470d2; }

.tab svg, .search svg {
  fill: none;
  stroke: currentColor;
  stroke-width: 1.3;
  stroke-linejoin: round;
}

.tab svg { width: 18px; height: 18px; }

.search {
  display: flex;
  align-items: center;
  gap: 4px;
  height: 34px;
  margin: 8px 11px 0;
  padding: 0 9px;
  border-radius: 10px;
  background: #f0f0f0;
  color: #5c5c5c;
  font-size: 13px;
}

.search svg { width: 15px; height: 15px; stroke-width: 1.6; }
.search input { flex: 1; }
.search input::placeholder { color: #858585; }

.group-title {
  padding: 0 16px;
  color: #212326;
  font-size: 14px;
  line-height: 27px;
  font-weight: 500;
}

.emoji-grid {
  display: grid;
  grid-template-columns: repeat(9, 33px);
  margin: 0 14px 0 10px;
  overflow: hidden;
}

.emoji-grid button {
  display: grid;
  place-items: center;
  height: 33px;
  padding-bottom: 2px;
}

.emoji-grid svg { width: 24px; height: 24px; overflow: visible; }
```
